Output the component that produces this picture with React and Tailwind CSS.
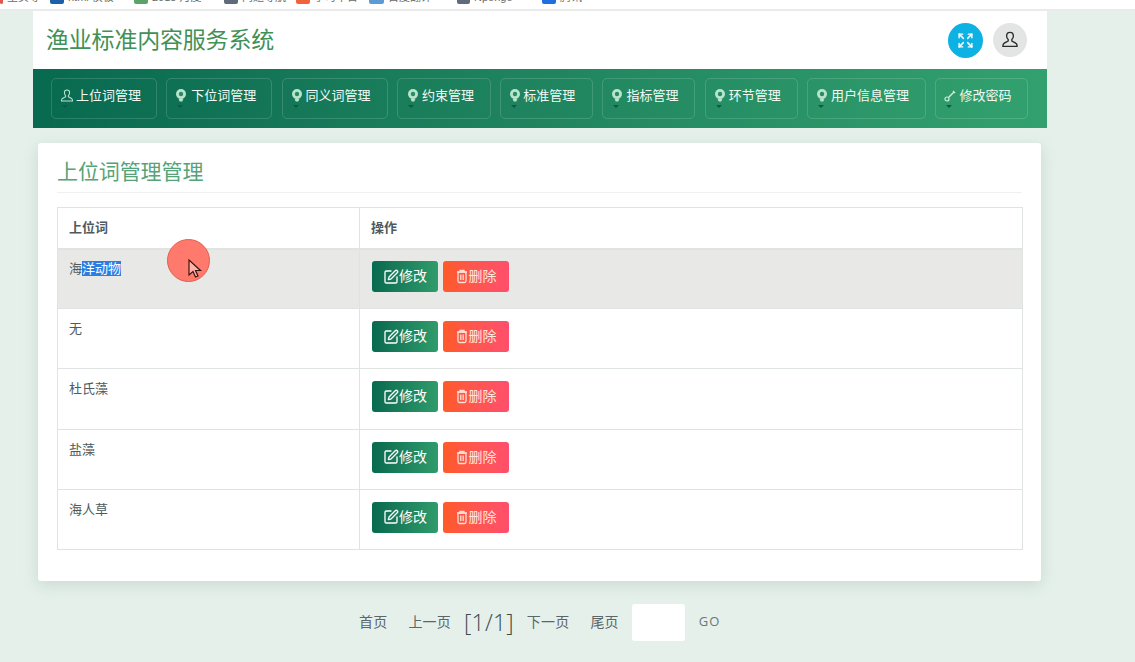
import { Expand, SquarePen } from 'lucide-react';

const menu = [
  { label: '上位词管理', w: 'w-[106px]', pl: 'pl-[8px]', gap: 'gap-[2px]', icon: 'user' },
  { label: '下位词管理', w: 'w-[106px]', pl: 'pl-[8px]', gap: 'gap-[4px]', icon: 'leaf' },
  { label: '同义词管理', w: 'w-[106px]', pl: 'pl-[8px]', gap: 'gap-[3px]', icon: 'leaf' },
  { label: '约束管理', w: 'w-[94px]', pl: 'pl-[9px]', gap: 'gap-[3px]', icon: 'leaf' },
  { label: '标准管理', w: 'w-[93px]', pl: 'pl-[8px]', gap: 'gap-[2px]', icon: 'leaf' },
  { label: '指标管理', w: 'w-[93px]', pl: 'pl-[8px]', gap: 'gap-[3px]', icon: 'leaf' },
  { label: '环节管理', w: 'w-[93px]', pl: 'pl-[8px]', gap: 'gap-[3px]', icon: 'leaf' },
  { label: '用户信息管理', w: 'w-[119px]', pl: 'pl-[8px]', gap: 'gap-[3px]', icon: 'leaf' },
  { label: '修改密码', w: 'w-[93px]', pl: 'pl-[8px]', gap: 'gap-[3px]', icon: 'key' },
];

const rows = ['海洋动物', '无', '杜氏藻', '盐藻', '海人草'];

const bookmarks = [
  { left: 'w-[50px]', color: 'bg-[#e2574c]', iconW: 'w-[3px]', text: '主页导' },
  { left: 'w-[84px]', color: 'bg-[#1d5fa8]', iconW: 'w-[14px]', text: 'html 模板' },
  { left: 'w-[90px]', color: 'bg-[#5aa469]', iconW: 'w-[14px]', text: '2018 月度' },
  { left: 'w-[72px]', color: 'bg-[#5f6b7a]', iconW: 'w-[14px]', text: '问题导航' },
  { left: 'w-[73px]', color: 'bg-[#f0643c]', iconW: 'w-[14px]', text: '学习平台' },
  { left: 'w-[88px]', color: 'bg-[#5b9bd5]', iconW: 'w-[15px]', text: '百度翻译' },
  { left: 'w-[85px]', color: 'bg-[#5f6b7a]', iconW: 'w-[13px]', text: 'Npongo' },
  { left: 'w-[60px]', color: 'bg-[#1f6fe0]', iconW: 'w-[14px]', text: '腾讯' },
];

function Leaf() {
  return (
    <svg width="12" height="14" viewBox="0 0 12 14" className="shrink-0">
      <circle cx="6" cy="5" r="5" fill="#b7e4cb" />
      <circle cx="6" cy="5" r="2.200" fill="#2a8a66" />
      <path d="M3.500 9.500h5l-1.200 3h-2.600z" fill="#b7e4cb" />
    </svg>
  );
}

function PersonIcon({ className, size }) {
  return (
    <svg width={size} height={size} viewBox="0 0 16 16" fill="none" stroke="currentColor" strokeWidth="1.200" className={className}>
      <path d="M8 1.200c-1.900 0-3 1.400-3 3.200 0 1.400.6 2.500 1.400 3.200v1.300c-1.400.7-3.400 1.400-4.200 2.500-.4.600-.5 1.400-.5 2.300h12.600c0-.9-.1-1.700-.5-2.300-.8-1.100-2.800-1.800-4.200-2.500V7.600c.8-.7 1.400-1.800 1.400-3.200 0-1.800-1.100-3.200-3-3.200z" />
    </svg>
  );
}

function KeySmall() {
  return (
    <svg width="12" height="12" viewBox="0 0 12 12" fill="none" className="shrink-0">
      <circle cx="3" cy="9" r="2" stroke="#cfeedd" strokeWidth="1.200" />
      <path d="M4.500 7.500L10 2" stroke="#cfeedd" strokeWidth="1.400" />
      <path d="M9 1l2 2" stroke="#cfeedd" strokeWidth="1.200" />
    </svg>
  );
}

function TrashIcon() {
  return (
    <svg width="12" height="15" viewBox="0 0 12 15" fill="none" stroke="#ffe0d6" strokeWidth="1.300" className="shrink-0">
      <path d="M1 3h10M4 3V1.500h4V3" />
      <rect x="2" y="3" width="8" height="10.500" rx="1.500" />
      <path d="M4.800 5.500v5.500M7.200 5.500v5.500" />
    </svg>
  );
}

function MenuItem({ item }) {
  return (
    <div className={`${item.w} ${item.pl} ${item.gap} relative h-[41px] shrink-0 rounded-[5px] border border-white/15 flex items-center pb-[5px] text-[13px] text-[#f2faf5]`}>
      {item.icon === 'user' && <PersonIcon size={14} className="text-[#b7e4cb] shrink-0" />}
      {item.icon === 'leaf' && <Leaf />}
      {item.icon === 'key' && <KeySmall />}
      <span className="whitespace-nowrap">{item.label}</span>
      <span className="absolute left-[10px] top-[26px] w-0 h-0 border-l-[3px] border-r-[3px] border-t-[3px] border-l-transparent border-r-transparent border-t-[#0b5a43]" />
    </div>
  );
}

function ActionButtons() {
  return (
    <div className="flex gap-[5px] pb-[4px]">
      <button className="w-[66px] h-[31px] rounded-[3px] bg-gradient-to-r from-[#07694f] to-[#2f9c6c] text-white text-[14px] flex items-center justify-center">
        <SquarePen size={16} strokeWidth={2} />
        <span>修改</span>
      </button>
      <button className="w-[66px] h-[31px] rounded-[3px] bg-gradient-to-r from-[#ff5a26] to-[#ff4f6c] text-[#ffe6df] text-[14px] flex items-center justify-center gap-[1px]">
        <TrashIcon />
        <span>删除</span>
      </button>
    </div>
  );
}

export default function App() {
  return (
    <div className="relative w-[1135px] h-[662px] overflow-hidden bg-[#e5f0eb] text-[#4e5a5e] font-['Liberation_Sans','Noto_Sans_CJK_SC',sans-serif]">
      <div className="h-[11px] bg-white border-b-2 border-[#e8ebea] overflow-hidden flex items-start text-[11px] leading-[14px] text-[#6a6a6a]">
        {bookmarks.map((b) => (
          <div key={b.text} className={`${b.left} shrink-0 flex items-center gap-[4px] -mt-[10px] overflow-hidden`}>
            <span className={`${b.color} ${b.iconW} h-[14px] rounded-[2px] shrink-0`} />
            <span className="whitespace-nowrap">{b.text}</span>
          </div>
        ))}
      </div>

      <div className="ml-[33px] w-[1014px]">
        <header className="h-[58px] bg-white flex items-center justify-between pl-[13px] pr-[20px]">
          <h1 className="text-[23px] tracking-[-0.2px] text-[#3f9157]">渔业标准内容服务系统</h1>
          <div className="flex items-center gap-[10px]">
            <div className="w-[35px] h-[35px] rounded-full bg-[#0db1e3] flex items-center justify-center text-white">
              <Expand size={17} strokeWidth={2} />
            </div>
            <div className="w-[34px] h-[34px] rounded-full bg-[#e3e5e4] flex items-center justify-center text-[#2b2b2b]">
              <PersonIcon size={18} />
            </div>
          </div>
        </header>

        <nav className="h-[59px] bg-gradient-to-r from-[#07694f] to-[#33a16f] flex items-center gap-[9.3px] pl-[18px]">
          {menu.map((item) => (
            <MenuItem key={item.label} item={item} />
          ))}
        </nav>
      </div>

      <main className="ml-[38px] mt-[15px] w-[1003px] h-[438px] bg-white rounded-[3px] shadow-[0_4px_16px_rgba(90,130,110,0.2)] px-[19px] pt-[14px]">
        <h2 className="text-[21px] leading-[29px] tracking-[-0.1px] text-[#55a377] pb-[6px] border-b border-[#eef1ef]">上位词管理管理</h2>
        <table className="mt-[14px] w-[966px] table-fixed border-collapse text-[13px]">
          <thead>
            <tr className="h-[41px]">
              <th className="w-[302px] border border-[#dfe3e2] border-b-2 pl-[11px] text-left font-bold">上位词</th>
              <th className="border border-[#dfe3e2] border-b-2 pl-[11px] text-left font-bold">操作</th>
            </tr>
          </thead>
          <tbody>
            {rows.map((row, i) => (
              <tr key={row} className={`h-[60.2px] ${i === 0 ? 'bg-[#e8e9e7]' : ''}`}>
                <td className={`border border-[#dfe3e2] pl-[11px] align-top ${i === 0 ? 'pt-[9px]' : 'pt-[10px]'}`}>
                  {i === 0 ? (
                    <>
                      海<span className="bg-[#2b7de0] text-white">洋动物</span>
                    </>
                  ) : (
                    row
                  )}
                </td>
                <td className="border border-[#dfe3e2] pl-[12px] align-middle">
                  <ActionButtons />
                </td>
              </tr>
            ))}
          </tbody>
        </table>
      </main>

      <div className="absolute left-[167px] top-[239px] w-[43px] h-[43px] rounded-full bg-[#ff7a6c] border border-[#e0604f]">
        <svg width="16" height="20" viewBox="0 0 16 20" className="absolute left-[20px] top-[19px]">
          <path d="M1 1v15l4-3.500 2.500 5.500 2.500-1-2.500-5.500h5z" fill="#ffb3a8" stroke="#3a1512" strokeWidth="1.200" />
        </svg>
      </div>

      <footer className="mt-[22px] h-[38px] flex items-center text-[14px] tracking-[0.2px] text-[#5a6668] pl-[359px]">
        <span>首页</span>
        <span className="ml-[21px]">上一页</span>
        <span className="ml-[13px] font-['Open_Sans','Liberation_Sans',sans-serif] text-[23px] font-light tracking-[0.2px] text-[#3f4a4d]">[1/1]</span>
        <span className="ml-[13px]">下一页</span>
        <span className="ml-[21px]">尾页</span>
        <input className="ml-[13px] w-[53px] h-[37px] bg-white rounded-[3px] outline-none" aria-label="页码" />
        <span className="ml-[14px] font-['Open_Sans','Liberation_Sans',sans-serif] text-[13px] tracking-[1px] text-[#6a7678]">GO</span>
      </footer>
    </div>
  );
}
